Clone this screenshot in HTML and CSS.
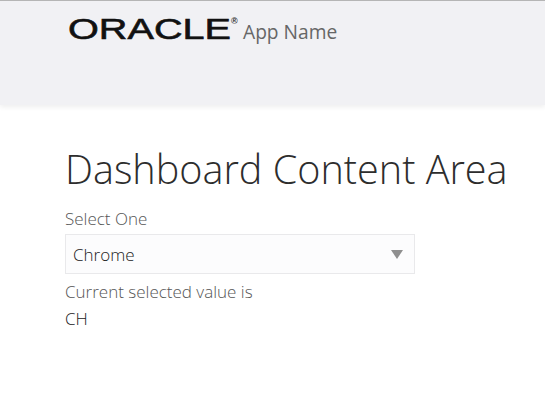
FILE: index.html
```html
<!DOCTYPE html>
<html lang="en">
<head>
<meta charset="utf-8">
<title>Dashboard</title>
<link rel="stylesheet" href="styles.css">
</head>
<body>
<header class="app-header">
  <div class="brand">
    <svg class="logo" width="172" height="30" viewBox="0 0 172 30" role="img" aria-label="Oracle">
      <text class="logo-word" x="0" y="24.5" textLength="163" lengthAdjust="spacingAndGlyphs">ORACLE</text>
      <text class="logo-mark" x="163" y="10">®</text>
    </svg>
    <span class="app-name">App Name</span>
  </div>
</header>
<main class="content">
  <h1 class="title">Dashboard Content Area</h1>
  <label class="field-label">Select One</label>
  <div class="select">
    <span>Chrome</span>
    <span class="arrow"></span>
  </div>
  <p class="muted">Current selected value is</p>
  <p class="value">CH</p>
</main>
</body>
</html>
```
FILE: styles.css
```css
* { box-sizing: border-box; }
html, body { margin: 0; padding: 0; background: #fff; }
body {
  font-family: "Open Sans", "Noto Sans", sans-serif;
  color: #333;
  height: 415px;
  overflow: hidden;
}
.app-header {
  height: 105px;
  background: #f1f1f4;
  border-top: 1px solid #b5b5b5;
  box-shadow: 0 2px 5px rgba(0, 0, 0, 0.07);
  padding: 13px 0 0 68px;
}
.brand { display: flex; align-items: flex-start; }
.logo { display: block; flex: none; }
.logo-word {
  font-family: "Liberation Sans", sans-serif;
  font-size: 29px;
  font-weight: 400;
  fill: #111;
  stroke: #111;
  stroke-width: 0.6px;
}
.logo-mark {
  font-family: "Liberation Sans", sans-serif;
  font-size: 9px;
  font-weight: 700;
  fill: #333;
}
.app-name {
  font-size: 19.2px;
  font-weight: 400;
  line-height: 24px;
  color: #666;
  margin: 6px 0 0 3px;
}
.content { padding: 38px 0 0 65px; }
.title {
  margin: 0;
  font-size: 39.6px;
  font-weight: 300;
  line-height: 52px;
  color: #2d2d2d;
  white-space: nowrap;
}
.field-label {
  display: block;
  margin-top: 12px;
  font-size: 17px;
  font-weight: 300;
  line-height: 24px;
  color: #555;
}
.select {
  width: 350px;
  height: 40px;
  margin-top: 3px;
  padding: 0 11px 0 7px;
  display: flex;
  align-items: center;
  justify-content: space-between;
  background: #fcfcfd;
  border: 1px solid #e9e9eb;
  font-size: 17px;
  font-weight: 300;
  color: #222;
}
.arrow {
  width: 0;
  height: 0;
  border-left: 6px solid transparent;
  border-right: 6px solid transparent;
  border-top: 9px solid #8f8f8f;
}
.muted, .value { margin: 0; font-size: 17px; font-weight: 300; line-height: 27px; }
.muted { margin-top: 4px; color: #555; }
.value { color: #222; }
```
